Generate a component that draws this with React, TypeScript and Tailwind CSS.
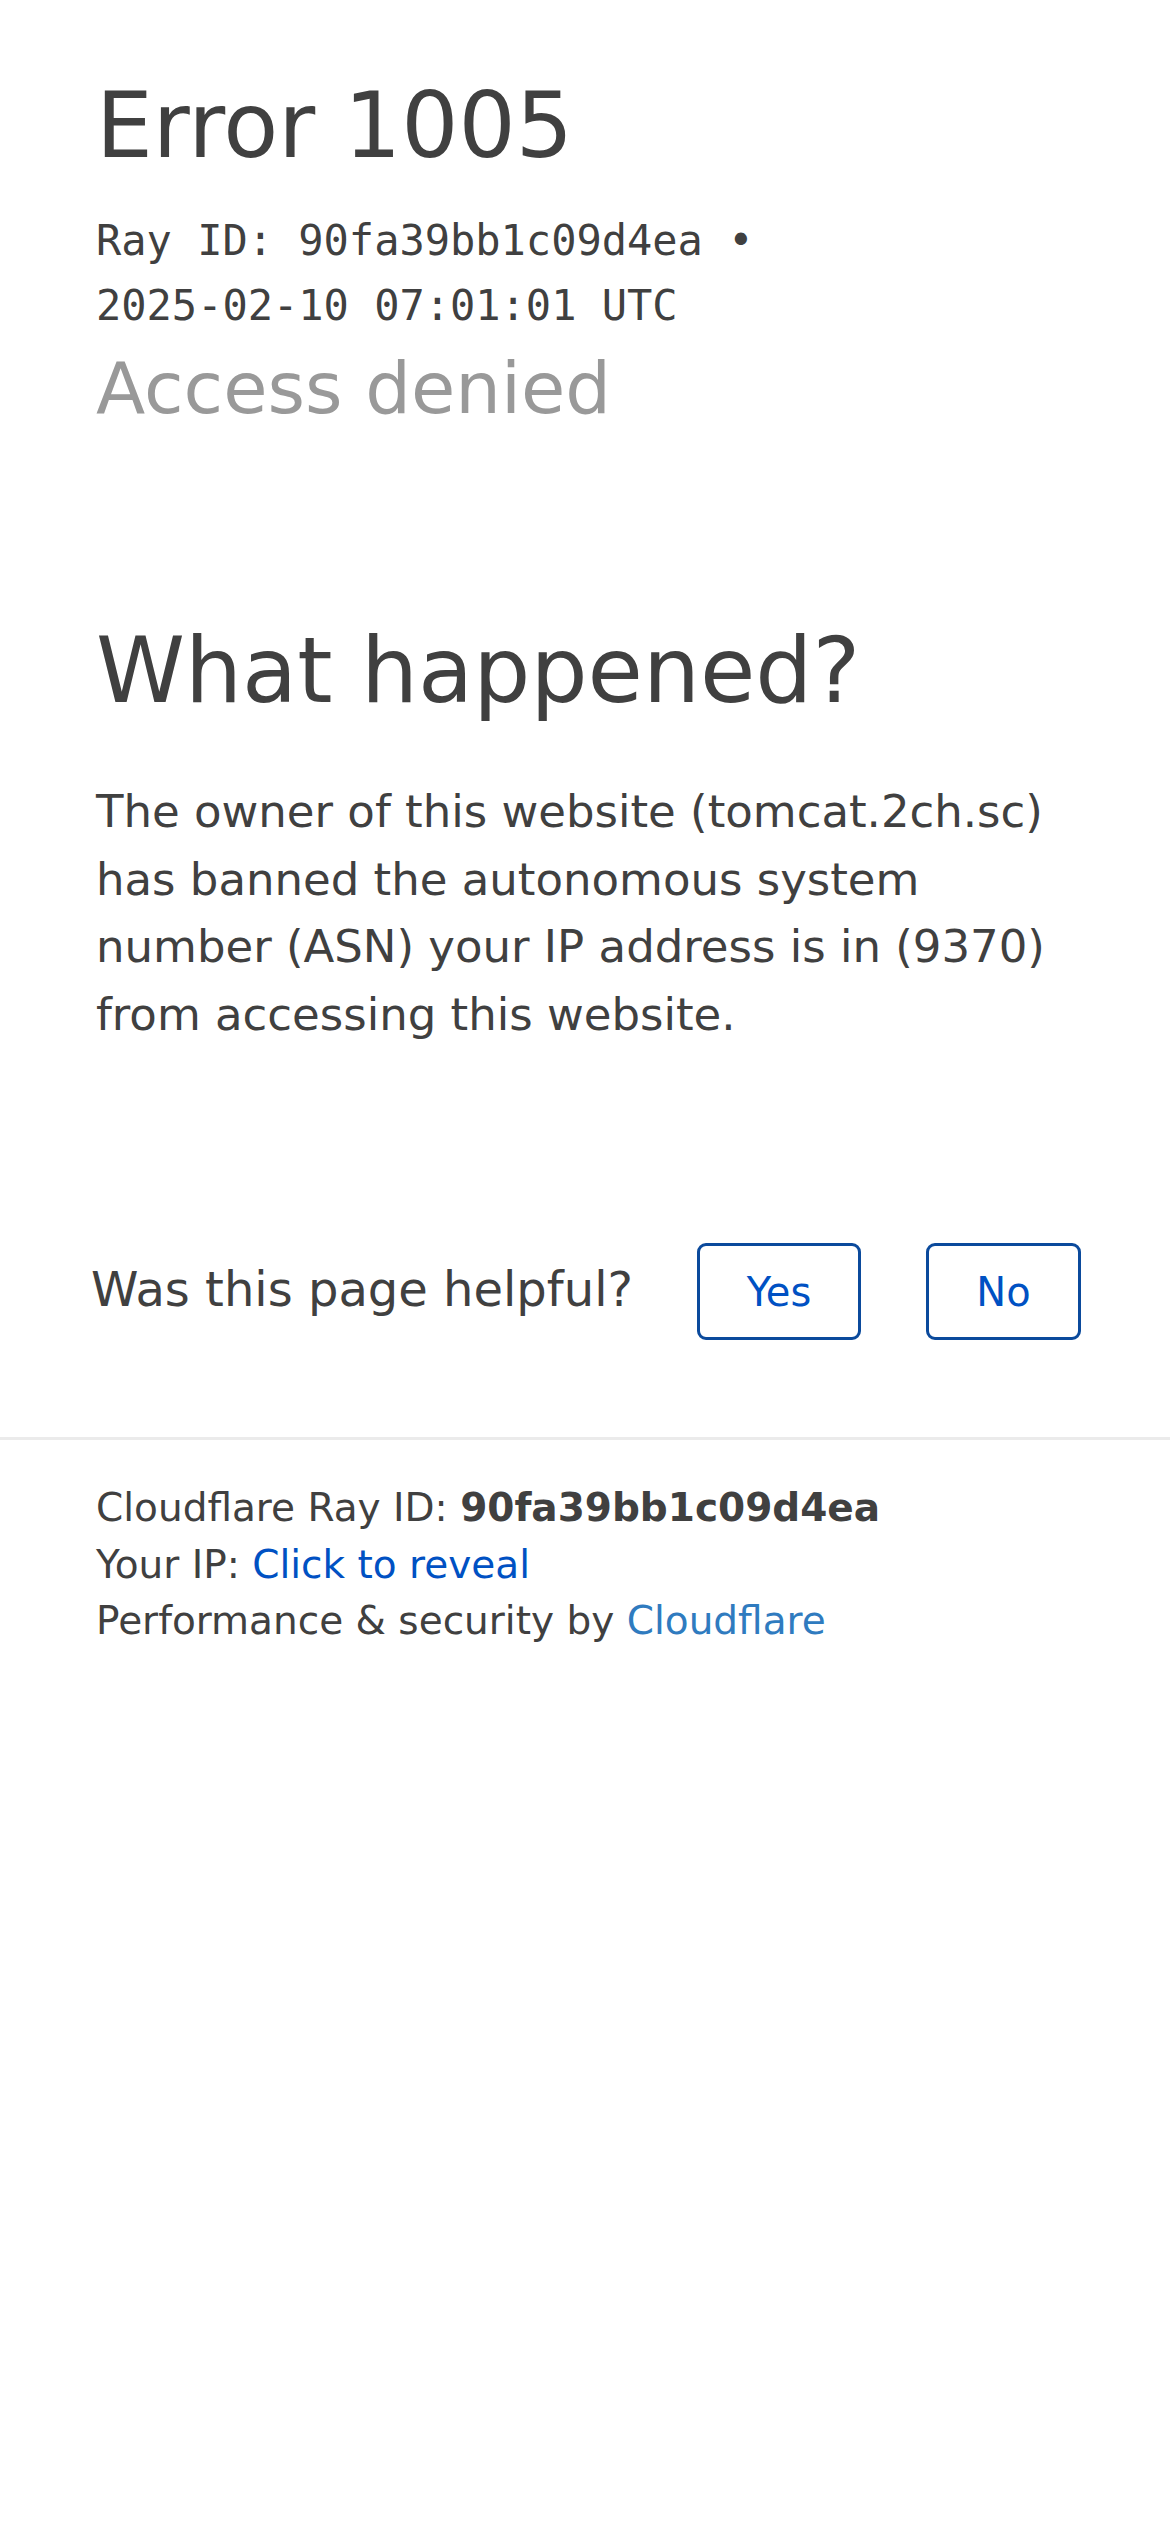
import React from 'react';

const App: React.FC = () => {
  return (
    <div className="min-h-[2532px] bg-white text-[#404040] font-['DejaVu_Sans',sans-serif]">
      <div className="px-[96px] pt-[72px]">
        <h1 className="text-[90px] leading-[108px] font-normal">Error 1005</h1>
        <div className="mt-[28px] font-['DejaVu_Sans_Mono',monospace] text-[42px] leading-[65px]">
          <span>Ray ID: 90fa39bb1c09d4ea •</span>
          <br />
          <span>2025-02-10 07:01:01 UTC</span>
        </div>
        <h2 className="mt-[7px] text-[72px] leading-[86px] font-normal text-[#999999]">Access denied</h2>

        <h2 className="mt-[186px] text-[90px] leading-[108px] font-normal">What happened?</h2>
        <p className="mt-[53px] text-[45px] leading-[67.5px]">
          The owner of this website (tomcat.2ch.sc) has banned the autonomous system number (ASN) your IP
          address is in (9370) from accessing this website.
        </p>
      </div>

      <div className="mt-[195px] flex items-baseline pl-[91px]">
        <span className="text-[48px] leading-[56px]">Was this page helpful?</span>
        <button className="ml-[64px] inline-flex h-[97px] w-[164px] items-center justify-center rounded-[9px] border-[3px] border-[#0b4a9c] bg-white text-[40px] leading-[46px] text-[#0051c3]">
          Yes
        </button>
        <button className="ml-[65px] inline-flex h-[97px] w-[155px] items-center justify-center rounded-[9px] border-[3px] border-[#0b4a9c] bg-white text-[40px] leading-[46px] text-[#0051c3]">
          No
        </button>
      </div>

      <div className="mt-[97px] h-[3px] bg-[#ebebeb]" />

      <div className="px-[96px] pt-[40px] text-[39px] leading-[56.5px]">
        <div>
          Cloudflare Ray ID: <span className="font-bold">90fa39bb1c09d4ea</span>
        </div>
        <div>
          Your IP: <span className="text-[#0051c3]">Click to reveal</span>
        </div>
        <div>
          Performance &amp; security by <a className="text-[#2f7bbf]">Cloudflare</a>
        </div>
      </div>
    </div>
  );
};

export default App;
